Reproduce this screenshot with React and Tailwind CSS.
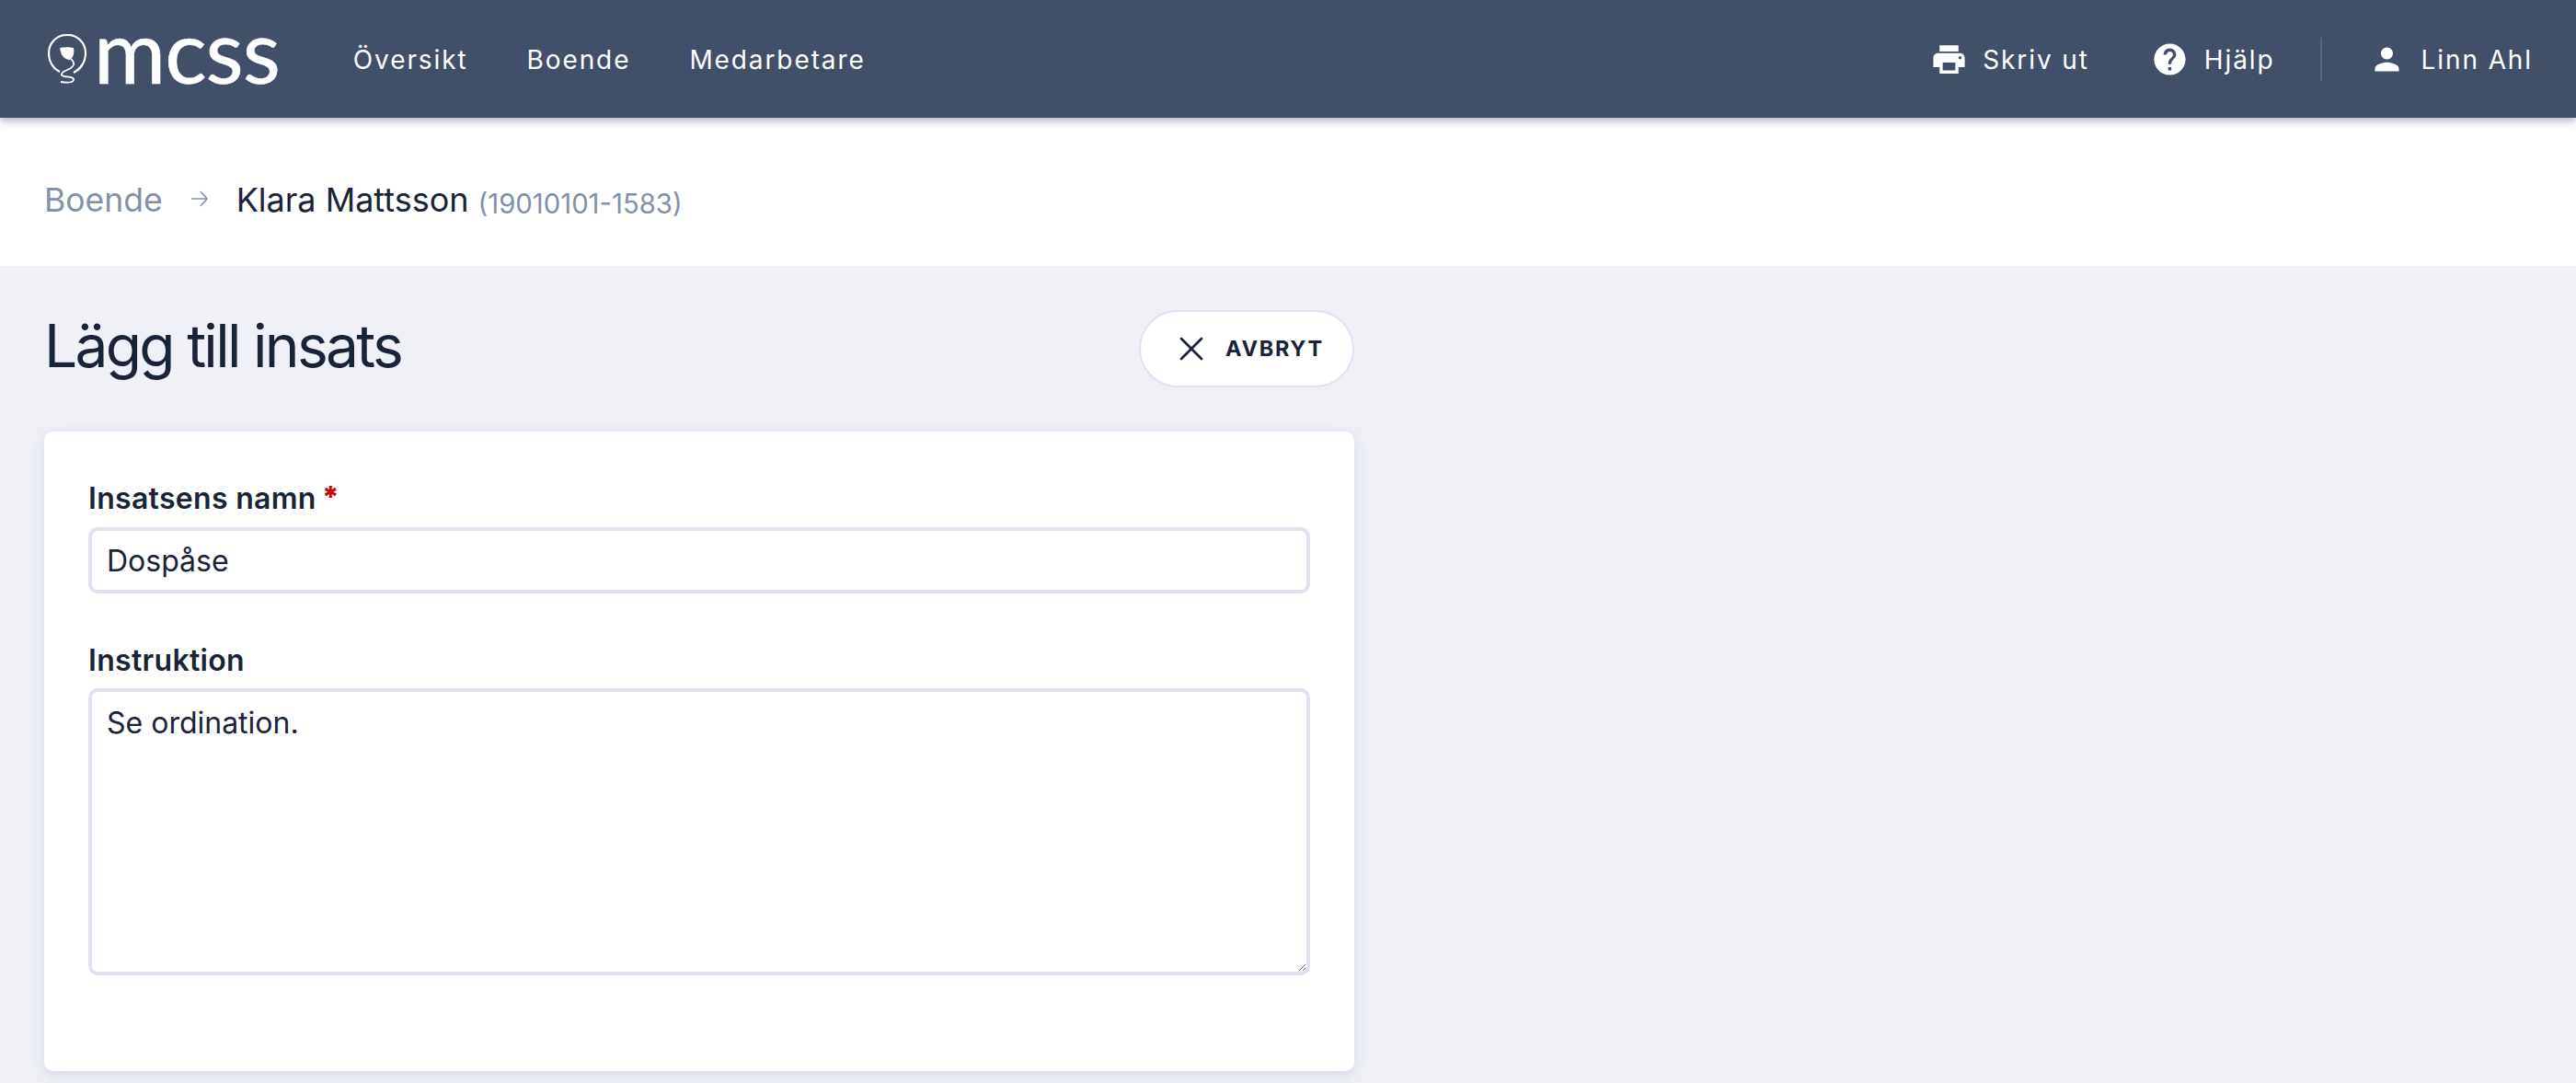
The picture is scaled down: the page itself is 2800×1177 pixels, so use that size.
import { X } from 'lucide-react';
import { MdPrint, MdHelp, MdPerson } from 'react-icons/md';

function Logo() {
  return (
    <div className="flex items-center">
      <svg width="42" height="54" viewBox="0 0 42 54" fill="none" className="mr-[8px]">
        <path d="M13 41C5 37 1 29 1 21C1 9 10 1 21 1C32 1 41 9 41 21C41 30 36 38 28 42" stroke="white" strokeWidth="2.2" />
        <path d="M13 15C18 14 24 14 28 15C29 20 28 25 24 28C18 28 14 23 13 15Z" fill="white" />
        <path d="M25 27C31 32 28 36 21 39C14 42 13 45 18 46C24 47 29 47 28 50C27 53 20 53 14 52" stroke="white" strokeWidth="1.8" />
      </svg>
      <span className="relative -top-[10px] font-['Lato',sans-serif] text-[95px] leading-[1.2] tracking-[-1px] text-white [-webkit-text-stroke:0.6px_white]">mcss</span>
    </div>
  );
}

function NavLink({ children }) {
  return <span className="relative top-[1px] text-[28px] tracking-[1.9px] text-white">{children}</span>;
}

export default function App() {
  return (
    <div className="h-[1177px] overflow-hidden bg-[#f0f1f6] font-['Inter',sans-serif] text-[#1a2438]">
      <header className="relative z-10 flex h-[128px] items-center justify-between bg-[#424f69] pl-[52px] pr-[47px] shadow-[0_4px_8px_rgba(66,79,105,0.4)]">
        <div className="flex items-center">
          <Logo />
          <nav className="ml-[80px] flex gap-[64px]">
            <NavLink>Översikt</NavLink>
            <NavLink>Boende</NavLink>
            <NavLink>Medarbetare</NavLink>
          </nav>
        </div>
        <div className="flex items-center">
          <MdPrint className="mr-[16px] text-white" size={41} />
          <NavLink>Skriv ut</NavLink>
          <MdHelp className="ml-[67px] mr-[17px] text-white" size={41} />
          <NavLink>Hjälp</NavLink>
          <div className="ml-[49px] mr-[51px] h-[47px] w-[2px] bg-[#5a6476]" />
          <MdPerson className="mr-[18px] text-white" size={39} />
          <NavLink>Linn Ahl</NavLink>
        </div>
      </header>

      <div className="flex h-[161px] items-baseline bg-white px-[48px] pt-[62px]">
        <span className="text-[35.5px] text-[#8290a9]">Boende</span>
        <svg width="24" height="24" viewBox="0 0 24 24" fill="none" stroke="#8290a9" strokeWidth="1.6" className="relative -top-[2px] mx-[28px]">
          <path d="M3 12H20M13 4L20 12L13 20" />
        </svg>
        <span className="text-[36px]">Klara Mattsson</span>
        <span className="relative top-[2px] ml-[10px] text-[29.3px] text-[#8290a9]">(19010101-1583)</span>
      </div>

      <main className="w-[1520px] px-[48px] pt-[48px]">
        <div className="flex h-[84px] items-center justify-between">
          <h1 className="relative -top-[3px] text-[64px] leading-[1.2] tracking-[-2.7px]">Lägg till insats</h1>
          <button className="flex h-[84px] w-[234px] items-center gap-[15px] rounded-full border-2 border-[#dfe2ef] bg-white pl-[33px] text-[23.5px] font-bold tracking-[1.7px]">
            <X size={44} strokeWidth={1.5} />
            AVBRYT
          </button>
        </div>

        <div className="mt-[48px] h-[695px] rounded-[10px] bg-white p-[48px] shadow-[0_4px_16px_rgba(200,205,225,0.7)]">
          <label className="block pt-[3px] text-[32px] leading-[44px] font-semibold tracking-[0.3px]">
            Insatsens namn <span className="relative -top-[1px] -ml-[2px] text-[32px] font-extrabold text-[#c80000]">*</span>
          </label>
          <input
            readOnly
            value="Dospåse"
            className="mt-[9px] block h-[72px] w-full rounded-[10px] border-4 border-[#dfe2ef] bg-white px-[16px] text-[32px] outline-none"
          />
          <label className="mt-[51px] block text-[32px] leading-[44px] font-semibold tracking-[0.3px]">Instruktion</label>
          <textarea
            readOnly
            value="Se ordination."
            className="mt-[8px] block h-[312px] w-full rounded-[10px] border-4 border-[#dfe2ef] bg-white px-[16px] py-[10px] text-[32px] outline-none"
          />
        </div>
      </main>
    </div>
  );
}
